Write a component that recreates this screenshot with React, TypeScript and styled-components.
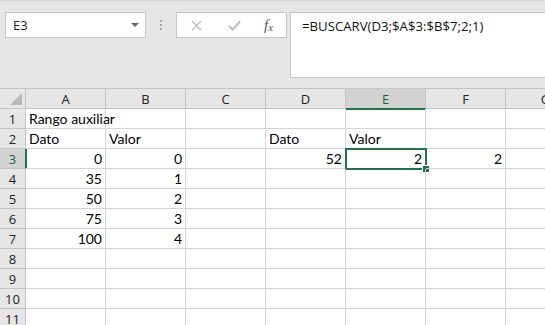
import React from "react";
import styled, { createGlobalStyle } from "styled-components";

const GlobalStyle = createGlobalStyle`
  html, body {
    margin: 0;
    padding: 0;
    background: #e6e6e6;
  }
  body {
    width: 545px;
    height: 325px;
    overflow: hidden;
  }
`;

const columns = ["A", "B", "C", "D", "E", "F", "G"];

type CellValue = { text: string; align?: "left" | "right" };

// sheet content, keyed by row then column
const sheet: Record<number, Record<string, CellValue>> = {
  1: { A: { text: "Rango auxiliar" } },
  2: { A: { text: "Dato" }, B: { text: "Valor" }, D: { text: "Dato" }, E: { text: "Valor" } },
  3: {
    A: { text: "0", align: "right" },
    B: { text: "0", align: "right" },
    D: { text: "52", align: "right" },
    E: { text: "2", align: "right" },
    F: { text: "2", align: "right" },
  },
  4: { A: { text: "35", align: "right" }, B: { text: "1", align: "right" } },
  5: { A: { text: "50", align: "right" }, B: { text: "2", align: "right" } },
  6: { A: { text: "75", align: "right" }, B: { text: "3", align: "right" } },
  7: { A: { text: "100", align: "right" }, B: { text: "4", align: "right" } },
};

const rows = Array.from({ length: 11 }, (_, i) => i + 1);
const activeCol = "E";
const activeRow = 3;

const App = () => {
  return (
    <Page>
      <GlobalStyle />
      <FormulaArea>
        <NameBox>
          <NameText>E3</NameText>
          <DropArrow />
        </NameBox>
        <Grip>
          <Dot />
          <Dot />
          <Dot />
        </Grip>
        <ButtonBox>
          <IconSlot>
            <svg width="11" height="11" viewBox="0 0 11 11">
              <path d="M1 1 L10 10 M10 1 L1 10" stroke="#bcbcbc" strokeWidth="1.4" fill="none" />
            </svg>
          </IconSlot>
          <IconSlot>
            <svg width="13" height="11" viewBox="0 0 13 11">
              <path d="M1 6 L4.8 9.6 L12 1.5" stroke="#bcbcbc" strokeWidth="2" fill="none" />
            </svg>
          </IconSlot>
          <FxLabel>
            f<sub>x</sub>
          </FxLabel>
        </ButtonBox>
        <FormulaBox>=BUSCARV(D3;$A$3:$B$7;2;1)</FormulaBox>
      </FormulaArea>
      <Grid>
        <Corner>
          <CornerTriangle />
        </Corner>
        {columns.map((c) => (
          <ColHeader key={c} $active={c === activeCol}>
            {c}
          </ColHeader>
        ))}
        {rows.map((r) => (
          <React.Fragment key={r}>
            <RowHeader $active={r === activeRow}>{r}</RowHeader>
            {columns.map((c) => {
              const cell = sheet[r]?.[c];
              const selected = r === activeRow && c === activeCol;
              return (
                <Cell key={c} $align={cell?.align ?? "left"}>
                  {cell?.text}
                  {selected && (
                    <Selection>
                      <FillHandle />
                    </Selection>
                  )}
                </Cell>
              );
            })}
          </React.Fragment>
        ))}
      </Grid>
    </Page>
  );
};

const Page = styled.div`
  width: 545px;
  height: 325px;
  overflow: hidden;
  background: #e6e6e6;
  border-top: 1px solid #d6d6d6;
  box-sizing: border-box;
`;

const FormulaArea = styled.div`
  display: flex;
  align-items: flex-start;
  height: 87px;
  padding: 11px 0 0 5px;
  box-sizing: border-box;
  font-family: "Open Sans", "DejaVu Sans", sans-serif;
`;

const NameBox = styled.div`
  display: flex;
  align-items: center;
  justify-content: space-between;
  width: 141px;
  height: 26px;
  box-sizing: border-box;
  background: #ffffff;
  border: 1px solid #c6c6c6;
  padding: 0 6px 0 7px;
`;

const NameText = styled.span`
  font-size: 13px;
  color: #222;
`;

const DropArrow = styled.span`
  width: 0;
  height: 0;
  border-left: 4px solid transparent;
  border-right: 4px solid transparent;
  border-top: 4px solid #666;
`;

const Grip = styled.div`
  display: flex;
  flex-direction: column;
  gap: 2px;
  width: 30px;
  height: 26px;
  align-items: center;
  justify-content: center;
`;

const Dot = styled.span`
  width: 2px;
  height: 2px;
  background: #a8a8a8;
`;

const ButtonBox = styled.div`
  display: flex;
  align-items: center;
  width: 111px;
  height: 26px;
  box-sizing: border-box;
  background: #ffffff;
  border: 1px solid #c6c6c6;
  padding-left: 13px;
`;

const IconSlot = styled.span`
  display: flex;
  align-items: center;
  justify-content: center;
  width: 13px;
  margin-right: 25px;
`;

const FxLabel = styled.span`
  font-family: "Liberation Serif", "DejaVu Serif", serif;
  font-style: italic;
  font-size: 15px;
  color: #555;
  margin-left: -2px;
  line-height: 1;

  sub {
    font-size: 11px;
    vertical-align: -1px;
  }
`;

const FormulaBox = styled.div`
  flex: 1;
  height: 66px;
  margin-left: 3px;
  margin-right: -2px;
  box-sizing: border-box;
  background: #ffffff;
  border: 1px solid #c6c6c6;
  padding: 4px 0 0 11px;
  font-size: 13.2px;
  color: #111;
  white-space: nowrap;
`;

const Grid = styled.div`
  display: grid;
  grid-template-columns: 26px repeat(7, 80px);
  grid-template-rows: 20px repeat(11, 20px);
  border-top: 1px solid #c4c4c4;
  background: #ffffff;
  width: max-content;
`;

const Corner = styled.div`
  position: relative;
  background: #e6e6e6;
  border-right: 1px solid #c4c4c4;
  border-bottom: 1px solid #c4c4c4;
`;

const CornerTriangle = styled.span`
  position: absolute;
  right: 3px;
  bottom: 3px;
  width: 0;
  height: 0;
  border-left: 12px solid transparent;
  border-bottom: 12px solid #b8b8b8;
`;

const ColHeader = styled.div<{ $active?: boolean }>`
  display: flex;
  align-items: center;
  justify-content: center;
  background: ${(p) => (p.$active ? "#d2d2d2" : "#e6e6e6")};
  border-right: 1px solid #c4c4c4;
  border-bottom: ${(p) => (p.$active ? "2px solid #217346" : "1px solid #c4c4c4")};
  margin-bottom: ${(p) => (p.$active ? "-1px" : "0")};
  position: relative;
  font-family: "Open Sans", "DejaVu Sans", sans-serif;
  font-size: 13px;
  color: ${(p) => (p.$active ? "#1d5e3a" : "#222")};
`;

const RowHeader = styled.div<{ $active?: boolean }>`
  display: flex;
  align-items: center;
  justify-content: center;
  background: ${(p) => (p.$active ? "#d2d2d2" : "#e6e6e6")};
  border-right: ${(p) => (p.$active ? "2px solid #217346" : "1px solid #c4c4c4")};
  margin-right: ${(p) => (p.$active ? "-1px" : "0")};
  border-bottom: 1px solid #c4c4c4;
  position: relative;
  font-family: "Open Sans", "DejaVu Sans", sans-serif;
  font-size: 13px;
  color: ${(p) => (p.$active ? "#1d5e3a" : "#222")};
`;

const Cell = styled.div<{ $align: "left" | "right" }>`
  position: relative;
  display: flex;
  align-items: center;
  justify-content: ${(p) => (p.$align === "right" ? "flex-end" : "flex-start")};
  padding: 0 3px;
  border-right: 1px solid #d4d4d4;
  border-bottom: 1px solid #d4d4d4;
  font-family: "Lato", "Liberation Sans", sans-serif;
  font-size: 14px;
  color: #000;
  white-space: nowrap;
  overflow: visible;
`;

const Selection = styled.span`
  position: absolute;
  left: -1px;
  top: -1px;
  right: -2px;
  bottom: -2px;
  border: 2px solid #217346;
  pointer-events: none;
`;

const FillHandle = styled.span`
  position: absolute;
  right: -5px;
  bottom: -5px;
  width: 6px;
  height: 6px;
  background: #217346;
  border: 1px solid #ffffff;
`;

export default App;
